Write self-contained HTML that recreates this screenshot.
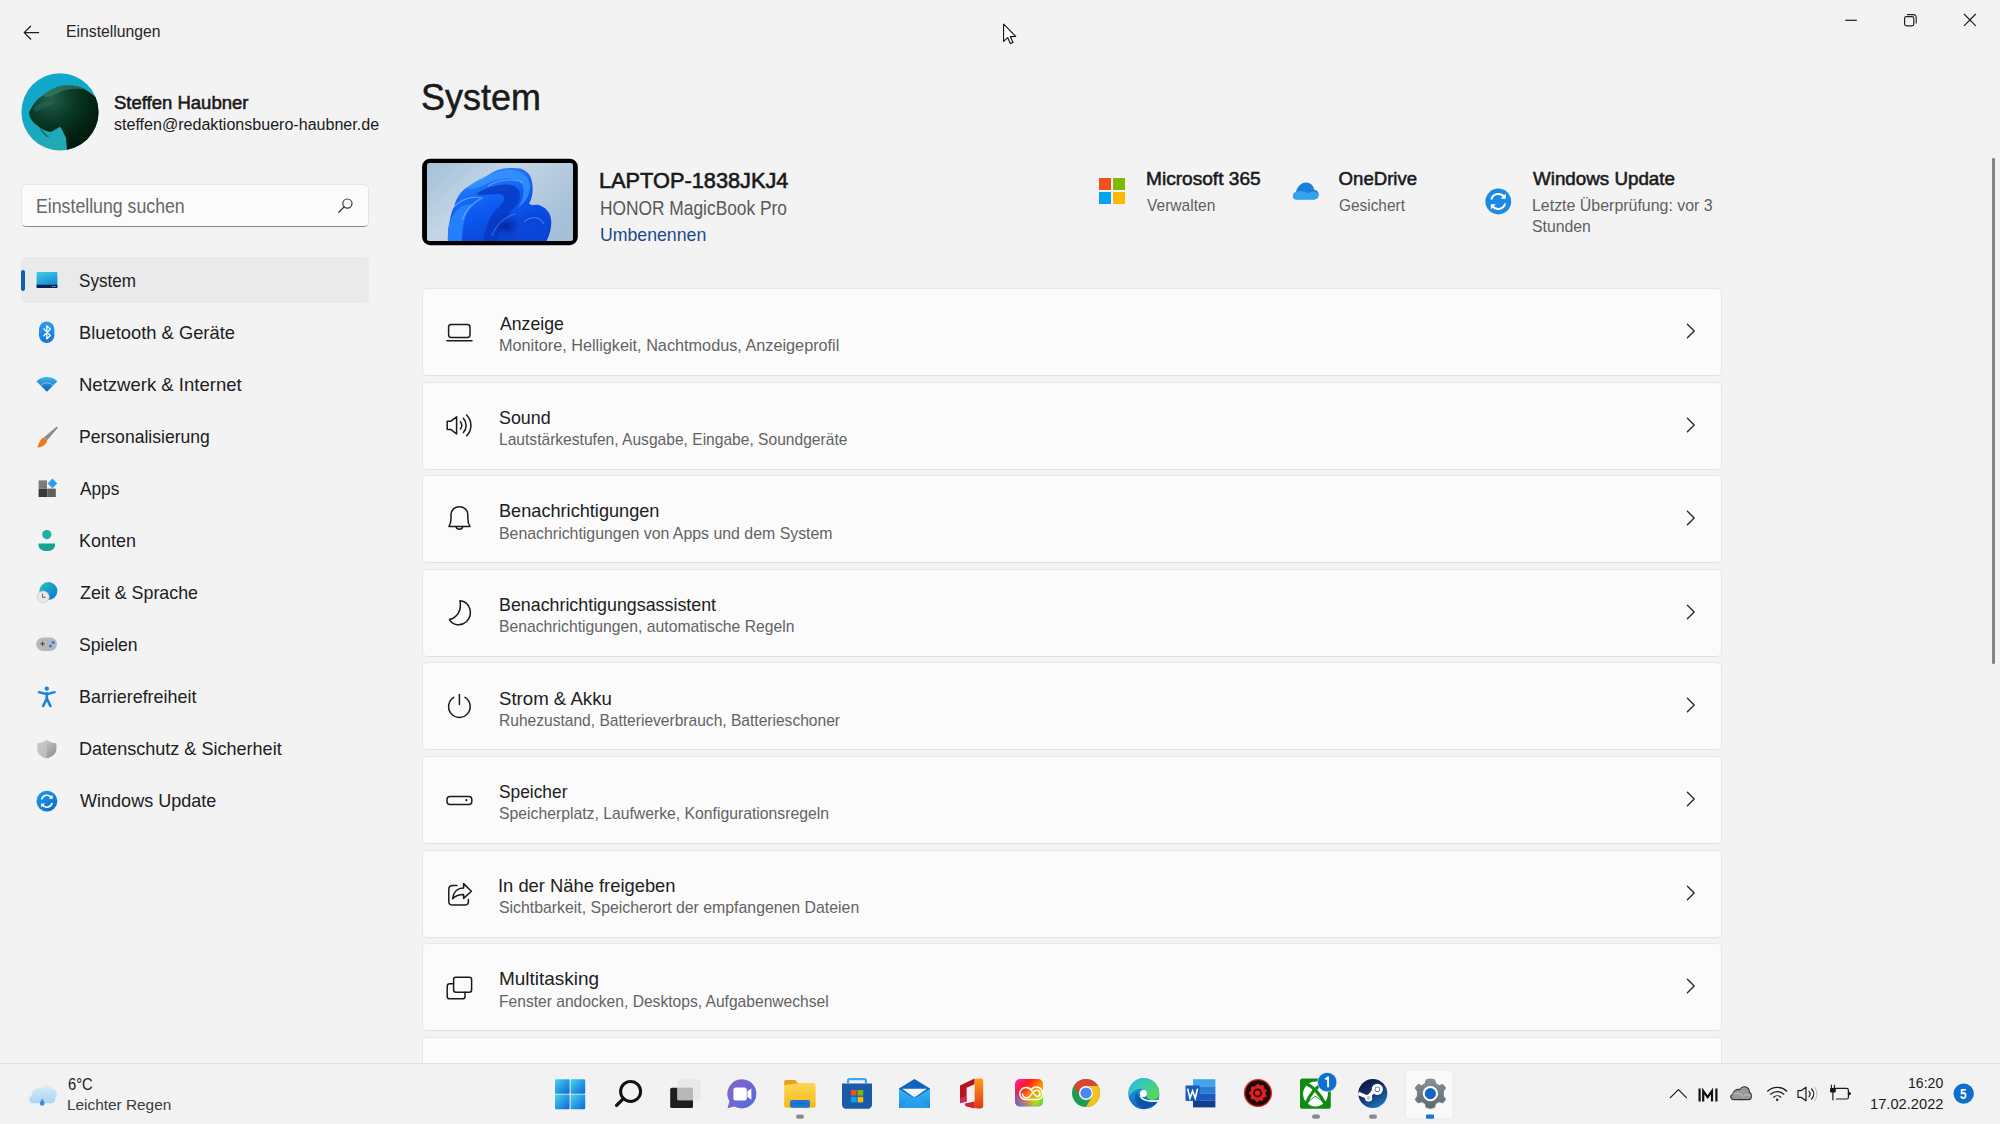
<!DOCTYPE html>
<html><head><meta charset="utf-8"><style>
html,body{margin:0;padding:0;width:2000px;height:1124px;overflow:hidden;background:#f3f3f3;font-family:"Liberation Sans", sans-serif;}
.t{position:absolute;white-space:nowrap;transform-origin:0 0;}
.a{position:absolute;}
svg{position:absolute;overflow:visible;}
</style></head><body>
<svg style="left:0;top:0" width="60" height="60" viewBox="0 0 60 60">
<path d="M38.6 32.6H24.2M30.6 26.2L24.2 32.6L30.6 39" fill="none" stroke="#1f1f1f" stroke-width="1.3" stroke-linecap="round" stroke-linejoin="round"/></svg>
<svg style="left:1830px;top:0" width="170" height="50" viewBox="1830 0 170 50">
<path d="M1845.2 20.3H1856.8" stroke="#1f1f1f" stroke-width="1.2"/>
<rect x="1904.6" y="16.6" width="9.2" height="9.2" rx="1.8" fill="none" stroke="#1f1f1f" stroke-width="1.2"/>
<path d="M1907 14.6H1913.4A2.8 2.8 0 0 1 1916.2 17.4V23.6" fill="none" stroke="#1f1f1f" stroke-width="1.1"/>
<path d="M1964 14L1975.8 25.8M1975.8 14L1964 25.8" stroke="#1f1f1f" stroke-width="1.2"/>
</svg>
<svg style="left:990px;top:15px" width="40" height="40" viewBox="990 15 40 40">
<path d="M1003.6 24.2V41.4L1007.6 37.6L1010.4 43.6L1013 42.4L1010.3 36.6L1015.7 36.4Z" fill="#fff" stroke="#111" stroke-width="1.1" stroke-linejoin="round"/></svg>
<svg style="left:18px;top:70px" width="84" height="84" viewBox="18 70 84 84">
<defs>
<linearGradient id="avbg" x1="0" y1="0" x2="0.3" y2="1"><stop offset="0" stop-color="#10a6d2"/><stop offset="0.55" stop-color="#14a9c4"/><stop offset="1" stop-color="#22aab2"/></linearGradient>
<radialGradient id="walrus" cx="0.3" cy="0.2" r="0.9"><stop offset="0" stop-color="#235f4a"/><stop offset="0.35" stop-color="#0a3a28"/><stop offset="0.7" stop-color="#02200f"/><stop offset="1" stop-color="#011508"/></radialGradient>
<clipPath id="avclip"><circle cx="60" cy="111.9" r="38.6"/></clipPath>
</defs>
<g clip-path="url(#avclip)">
<rect x="18" y="70" width="84" height="84" fill="url(#avbg)"/>
<path d="M29.2 111.9C33 104 38 98 42.7 95.4C50 90 56 86.5 62.8 85.7C72 85 80 86 85.3 89.4C90 92 94 96 99 100L102 154H67.3C66.5 146 66.5 141 65.8 137.3C63 132 62 129 59.9 126.8C56 129 53 131.5 50.1 132C45 131 41 129 38.9 126.8C35 124 32 121.5 30.7 118.6C29.5 116 29 114 29.2 111.9Z" fill="url(#walrus)"/>
<path d="M42.7 95.4C50 90 56 86.5 62.8 85.7C72 85 80 86 85.3 89.4C76 88 66 89 58 93C52 96 47 99 42.7 95.4Z" fill="#3f8a72" opacity="0.55"/>
<path d="M33 108C38 103 46 100 54 103C50 106 42 108 36 112Z" fill="#2e6a5c" opacity="0.5"/>
<path d="M38.9 126.8C42 130 46 134 49 137C47 138 44 135 41 131Z" fill="#0e5a55" opacity="0.7"/>
</g></svg>
<div class="a" style="left:21px;top:184px;width:348px;height:43px;box-sizing:border-box;background:#fbfbfb;border:1px solid #e6e6e6;border-bottom:1px solid #8a8a8a;border-radius:5px"></div>
<svg style="left:330px;top:190px" width="30" height="30" viewBox="330 190 30 30">
<circle cx="347.4" cy="203.6" r="4.6" fill="none" stroke="#3a3a3a" stroke-width="1.2"/>
<path d="M344.2 206.8L338.8 212.2" stroke="#3a3a3a" stroke-width="1.3" stroke-linecap="round"/></svg>
<div class="a" style="left:21px;top:257px;width:348px;height:45.5px;background:#eaeaea;border-radius:5px"></div>
<div class="a" style="left:21px;top:270px;width:4px;height:20.5px;background:#0f5fb3;border-radius:2px"></div>
<svg style="left:30px;top:260px" width="36" height="560" viewBox="30 260 36 560">
<defs>
<linearGradient id="sysg" x1="0" y1="0" x2="0.4" y2="1"><stop offset="0" stop-color="#3fd0e4"/><stop offset="1" stop-color="#1684d4"/></linearGradient>
<linearGradient id="btg" x1="0" y1="0" x2="0" y2="1"><stop offset="0" stop-color="#2b9cf2"/><stop offset="1" stop-color="#1677d8"/></linearGradient>
<linearGradient id="wifig" x1="0" y1="0" x2="0" y2="1"><stop offset="0" stop-color="#3ab8f5"/><stop offset="1" stop-color="#0c5ab8"/></linearGradient>
<linearGradient id="globeg" x1="0" y1="0" x2="1" y2="1"><stop offset="0" stop-color="#26c6c0"/><stop offset="1" stop-color="#0a6fd0"/></linearGradient>
<linearGradient id="shg" x1="0" y1="0" x2="1" y2="1"><stop offset="0" stop-color="#d8d8d8"/><stop offset="1" stop-color="#8a8a8a"/></linearGradient>
<linearGradient id="wug" x1="0" y1="0" x2="1" y2="1"><stop offset="0" stop-color="#1e9bf0"/><stop offset="1" stop-color="#0b6cc9"/></linearGradient>
</defs>
<!-- System -->
<rect x="36.6" y="272" width="20.8" height="16" rx="1.2" fill="url(#sysg)"/>
<rect x="36.6" y="284.8" width="20.8" height="3.2" rx="0.8" fill="#06244f"/><rect x="52.4" y="286" width="0.9" height="1" fill="#cfe"/><rect x="54.4" y="286" width="0.9" height="1" fill="#cfe"/>
<!-- Bluetooth -->
<rect x="39" y="321.6" width="15.4" height="21.4" rx="7.7" fill="url(#btg)"/>
<path d="M43.4 328.4L50.4 335.6L46.8 338.8V325.8L50.4 329L43.4 336.2" fill="none" stroke="#fff" stroke-width="1.3" stroke-linejoin="round"/>
<!-- Wifi -->
<path d="M36.4 381.2A15 15 0 0 1 57.4 381.2L46.9 391.8Z" fill="url(#wifig)"/>
<path d="M40.6 385.4A9 9 0 0 1 53.2 385.4" fill="none" stroke="#fff" stroke-width="0.9" opacity="0.5"/>
<!-- Brush -->
<path d="M56.8 426.4L58 427.6L47.2 440.2L44 437.2Z" fill="#8d8d8d"/>
<path d="M44 437.2L47.2 440.2C46.6 444 43 447 37.4 447.4C38.8 443 40.4 438.6 44 437.2Z" fill="#f07a1a"/>
<!-- Apps -->
<rect x="38.6" y="480.4" width="8.4" height="8" fill="#7c7c7c"/>
<rect x="38.6" y="488.6" width="8.4" height="8.4" fill="#383838"/>
<rect x="47.2" y="488.6" width="8.6" height="8.4" fill="#5e5e5e"/>
<path d="M52.4 478.6L57.2 483.4L52.4 488.2L47.6 483.4Z" fill="#2b9df0"/>
<!-- Konten -->
<circle cx="46.8" cy="534.6" r="4.6" fill="#1fb0a0"/>
<path d="M38.6 543.4H55A0 0 0 0 1 55 543.4V545.2C55 549 51.2 551 46.8 551C42.4 551 38.6 549 38.6 545.2Z" fill="#17a392"/>
<!-- Zeit -->
<circle cx="48.4" cy="591" r="9" fill="url(#globeg)"/>
<circle cx="43.2" cy="597" r="6" fill="#e8e8e8" stroke="#c8c8c8" stroke-width="0.6"/>
<path d="M42.6 593.6V597.4H45.6" fill="none" stroke="#555" stroke-width="0.9"/>
<!-- Spielen -->
<rect x="36.2" y="637.4" width="20.8" height="13.6" rx="6.8" fill="#b8b8bc"/>
<path d="M40.4 643.8H44.8M42.6 641.6V646" stroke="#444" stroke-width="1"/>
<circle cx="50.4" cy="646" r="1.5" fill="#1e7fd8"/><circle cx="53.2" cy="642.6" r="1.5" fill="#1e7fd8"/>
<!-- Barriere -->
<circle cx="46.8" cy="688.6" r="2.2" fill="#1a84dd"/>
<path d="M39 692.2L46.8 694.2L54.6 692.2" fill="none" stroke="#1a84dd" stroke-width="2.4" stroke-linecap="round"/>
<path d="M46.8 693.4V698.4L43.2 706M46.8 698.4L50.4 706" fill="none" stroke="#1a84dd" stroke-width="2.6" stroke-linecap="round"/>
<!-- Shield -->
<path d="M46.9 740C50 742.4 53.4 743.2 56.4 743.2V749.2C56.4 753.6 52.8 756.8 46.9 758.2C41 756.8 37.4 753.6 37.4 749.2V743.2C40.4 743.2 43.8 742.4 46.9 740Z" fill="url(#shg)"/>
<path d="M46.9 740V758.2C41 756.8 37.4 753.6 37.4 749.2V743.2C40.4 743.2 43.8 742.4 46.9 740Z" fill="#c4c4c4" opacity="0.7"/>
<!-- WU -->
<circle cx="46.9" cy="801.2" r="10.4" fill="url(#wug)"/>
<path d="M41.6 799.4A5.6 5.6 0 0 1 51.6 797.6M52.2 803A5.6 5.6 0 0 1 42.2 804.8" fill="none" stroke="#fff" stroke-width="1.6"/>
<path d="M52.6 794.8V798.8H48.8Z" fill="#fff"/><path d="M41.2 807.6V803.6H45Z" fill="#fff"/>
</svg>
<svg style="left:420px;top:156px" width="162" height="94" viewBox="420 156 162 94">
<defs>
<linearGradient id="scr" x1="0" y1="0" x2="1" y2="0.6"><stop offset="0" stop-color="#a3bfd8"/><stop offset="0.45" stop-color="#c4d6e6"/><stop offset="1" stop-color="#a6c0d8"/></linearGradient>
<linearGradient id="bl1" x1="0.2" y1="0" x2="0.7" y2="1"><stop offset="0" stop-color="#2f8cff"/><stop offset="0.5" stop-color="#0b5af2"/><stop offset="1" stop-color="#0a3fd0"/></linearGradient>
<radialGradient id="blc" cx="0.5" cy="0.5" r="0.5"><stop offset="0" stop-color="#06208a"/><stop offset="1" stop-color="#0a3ad0" stop-opacity="0"/></radialGradient>
<clipPath id="scc"><rect x="427" y="163" width="146" height="78" rx="2"/></clipPath>
</defs>
<rect x="424.3" y="160.9" width="151.3" height="82.1" rx="6" fill="#000" stroke="#000" stroke-width="4.4"/>
<rect x="427" y="163" width="146" height="78" rx="2" fill="url(#scr)"/>
<g clip-path="url(#scc)">
<path d="M448 242C447.6 234 448.4 226 449.6 222C450.6 215 452 210 454 207C455 203 456 200 457.4 198C460 193 463 190 466 188C472 184 477 181 483 179C490 173 497 169.6 503.5 168.6C510 167.6 516 167.8 520.5 168.6C526 170.6 529.6 174 531 178C532.6 183 533 188 532.5 192.5C532 197 530.8 201 529 203.6L531.7 205.3C534 204.6 536.4 204.6 539 205C543.4 206.4 547.4 209.6 549.6 214C551.2 218 551.6 222 551 226.6C550.4 232 548.6 237 546 242Z" fill="url(#bl1)"/>
<path d="M466 188C476 180 492 172 506 170C518 169 528 174 530 184C531 194 526 202 518 208C524 198 526 188 520 182C512 176 498 178 486 184C478 188 472 190 466 188Z" fill="#3b95ff" opacity="0.75"/>
<path d="M476 194C488 186 504 182 514 186C522 190 522 200 514 208C506 216 500 226 498 242H484C484 228 490 214 500 206C506 200 506 194 498 194C490 194 482 196 476 194Z" fill="#0838c0" opacity="0.8"/>
<ellipse cx="506" cy="226" rx="18" ry="14" fill="url(#blc)" opacity="0.9"/>
<path d="M449.6 222C454 210 462 204 472 204C466 212 462 224 462 242H448C447.6 234 448.4 226 449.6 222Z" fill="#2a86ff" opacity="0.85"/>
<path d="M454 207C462 198 474 196 482 198C474 202 466 210 462 220" fill="none" stroke="#70b8ff" stroke-width="1.2" opacity="0.7"/>
<path d="M520 218C528 210 540 210 546 218C550 226 548 236 544 242H516C514 232 516 224 520 218Z" fill="#0b46d8" opacity="0.85"/>
<path d="M524 222C530 216 540 216 544 224" fill="none" stroke="#4aa0ff" stroke-width="1.1" opacity="0.7"/>
<path d="M488 186C498 180 512 178 522 182" fill="none" stroke="#8cc8ff" stroke-width="1" opacity="0.6"/>
<path d="M492 236C496 224 506 216 516 214" fill="none" stroke="#3a8cff" stroke-width="1.1" opacity="0.6"/>
</g>
</svg>
<svg style="left:1090px;top:170px" width="440" height="60" viewBox="1090 170 440 60">
<defs><linearGradient id="odg" x1="0" y1="0" x2="0" y2="1"><stop offset="0" stop-color="#0a64c8"/><stop offset="1" stop-color="#2a9ae8"/></linearGradient></defs>
<rect x="1099" y="178" width="12" height="12" fill="#f25022"/>
<rect x="1113" y="178" width="12" height="12" fill="#7fba00"/>
<rect x="1099" y="192" width="12" height="12" fill="#00a4ef"/>
<rect x="1113" y="192" width="12" height="12" fill="#ffb900"/>
<path d="M1296.4 199.4C1292 199.4 1291.6 193 1296 192.2C1296.8 187.4 1301.2 182.6 1306 182.6C1310.4 182.6 1313.6 185.8 1314.2 189.8C1317.6 190 1319 193 1318.6 195.6C1318.4 198 1316.6 199.4 1314 199.4Z" fill="#1a7fd8"/>
<path d="M1296.4 199.4C1292 199.4 1291.6 193 1296 192.2C1299 190.4 1304 190.6 1308 193.4C1311 191 1315.6 190.6 1318 193.4C1319.2 196.6 1317 199.4 1314 199.4Z" fill="#34a3ef"/>
</svg>
<svg style="left:1480px;top:184px" width="36" height="36" viewBox="1480 184 36 36">
<circle cx="1498.3" cy="201.5" r="12.9" fill="#1a8ae6"/>
<path d="M1491.4 199.4A7.2 7.2 0 0 1 1504.4 197.2M1505.2 203.6A7.2 7.2 0 0 1 1492.2 205.8" fill="none" stroke="#fff" stroke-width="2"/>
<path d="M1505.8 193.6V198.8H1500.8Z" fill="#fff"/><path d="M1490.8 209.4V204.2H1495.8Z" fill="#fff"/>
</svg>
<div class="a" style="left:422px;top:288.0px;width:1300px;height:88.0px;box-sizing:border-box;background:#fbfbfb;border:1px solid #e6e6e6;border-bottom-color:#e0e0e0;border-radius:5px;"></div>
<svg style="left:1680px;top:320.9px" width="20" height="20" viewBox="0 0 20 20"><path d="M7.4 3.2L14.2 10L7.4 16.8" fill="none" stroke="#262626" stroke-width="1.3" stroke-linecap="round" stroke-linejoin="round"/></svg>
<div class="a" style="left:422px;top:381.6px;width:1300px;height:88.0px;box-sizing:border-box;background:#fbfbfb;border:1px solid #e6e6e6;border-bottom-color:#e0e0e0;border-radius:5px;"></div>
<svg style="left:1680px;top:414.5px" width="20" height="20" viewBox="0 0 20 20"><path d="M7.4 3.2L14.2 10L7.4 16.8" fill="none" stroke="#262626" stroke-width="1.3" stroke-linecap="round" stroke-linejoin="round"/></svg>
<div class="a" style="left:422px;top:475.2px;width:1300px;height:88.0px;box-sizing:border-box;background:#fbfbfb;border:1px solid #e6e6e6;border-bottom-color:#e0e0e0;border-radius:5px;"></div>
<svg style="left:1680px;top:508.1px" width="20" height="20" viewBox="0 0 20 20"><path d="M7.4 3.2L14.2 10L7.4 16.8" fill="none" stroke="#262626" stroke-width="1.3" stroke-linecap="round" stroke-linejoin="round"/></svg>
<div class="a" style="left:422px;top:568.8px;width:1300px;height:88.0px;box-sizing:border-box;background:#fbfbfb;border:1px solid #e6e6e6;border-bottom-color:#e0e0e0;border-radius:5px;"></div>
<svg style="left:1680px;top:601.7px" width="20" height="20" viewBox="0 0 20 20"><path d="M7.4 3.2L14.2 10L7.4 16.8" fill="none" stroke="#262626" stroke-width="1.3" stroke-linecap="round" stroke-linejoin="round"/></svg>
<div class="a" style="left:422px;top:662.4px;width:1300px;height:88.0px;box-sizing:border-box;background:#fbfbfb;border:1px solid #e6e6e6;border-bottom-color:#e0e0e0;border-radius:5px;"></div>
<svg style="left:1680px;top:695.3px" width="20" height="20" viewBox="0 0 20 20"><path d="M7.4 3.2L14.2 10L7.4 16.8" fill="none" stroke="#262626" stroke-width="1.3" stroke-linecap="round" stroke-linejoin="round"/></svg>
<div class="a" style="left:422px;top:756.0px;width:1300px;height:88.0px;box-sizing:border-box;background:#fbfbfb;border:1px solid #e6e6e6;border-bottom-color:#e0e0e0;border-radius:5px;"></div>
<svg style="left:1680px;top:788.9px" width="20" height="20" viewBox="0 0 20 20"><path d="M7.4 3.2L14.2 10L7.4 16.8" fill="none" stroke="#262626" stroke-width="1.3" stroke-linecap="round" stroke-linejoin="round"/></svg>
<div class="a" style="left:422px;top:849.6px;width:1300px;height:88.0px;box-sizing:border-box;background:#fbfbfb;border:1px solid #e6e6e6;border-bottom-color:#e0e0e0;border-radius:5px;"></div>
<svg style="left:1680px;top:882.5px" width="20" height="20" viewBox="0 0 20 20"><path d="M7.4 3.2L14.2 10L7.4 16.8" fill="none" stroke="#262626" stroke-width="1.3" stroke-linecap="round" stroke-linejoin="round"/></svg>
<div class="a" style="left:422px;top:943.2px;width:1300px;height:88.0px;box-sizing:border-box;background:#fbfbfb;border:1px solid #e6e6e6;border-bottom-color:#e0e0e0;border-radius:5px;"></div>
<svg style="left:1680px;top:976.1px" width="20" height="20" viewBox="0 0 20 20"><path d="M7.4 3.2L14.2 10L7.4 16.8" fill="none" stroke="#262626" stroke-width="1.3" stroke-linecap="round" stroke-linejoin="round"/></svg>
<div class="a" style="left:422px;top:1036.8px;width:1300px;height:26.2px;box-sizing:border-box;background:#fbfbfb;border:1px solid #e6e6e6;border-bottom-color:#e0e0e0;border-radius:5px 5px 0 0;border-bottom:none;"></div>
<svg style="left:0;top:0" width="2000" height="1124" viewBox="0 0 2000 1124"><rect x="448.6" y="324.4" width="21.4" height="13" rx="2.6" fill="none" stroke="#1a1a1a" stroke-width="1.5" stroke-linecap="round" stroke-linejoin="round"/><path d="M446.8 340.8H472" fill="none" stroke="#1a1a1a" stroke-width="1.5" stroke-linecap="round" stroke-linejoin="round"/><path d="M447.2 421.2H451L456.6 416.8V434L451 429.6H447.2Z" fill="none" stroke="#1a1a1a" stroke-width="1.5" stroke-linecap="round" stroke-linejoin="round"/><path d="M460.4 421.8C462.4 424.2 462.4 426.6 460.4 429" fill="none" stroke="#1a1a1a" stroke-width="1.5" stroke-linecap="round" stroke-linejoin="round"/><path d="M463.4 418.2C467 422.4 467 428.4 463.4 432.6" fill="none" stroke="#1a1a1a" stroke-width="1.5" stroke-linecap="round" stroke-linejoin="round"/><path d="M466.6 415C472.4 421.2 472.4 429.6 466.6 435.8" fill="none" stroke="#1a1a1a" stroke-width="1.5" stroke-linecap="round" stroke-linejoin="round"/><path d="M449 526.4C450.6 524 451 522 451 518.2V514.6C451 509.6 455 506.8 459.4 506.8C463.8 506.8 467.8 509.6 467.8 514.6V518.2C467.8 522 468.2 524 470 526.4Z" fill="none" stroke="#1a1a1a" stroke-width="1.5" stroke-linecap="round" stroke-linejoin="round"/><path d="M456 526.6A3.5 3.5 0 0 0 462.8 526.6" fill="none" stroke="#1a1a1a" stroke-width="1.5" stroke-linecap="round" stroke-linejoin="round"/><path d="M460 600.8C470 601.8 474 614 466.4 621.8C461 626.6 452.8 625.4 449.4 619.6C456.6 617.8 462 610.8 460 600.8Z" fill="none" stroke="#1a1a1a" stroke-width="1.5" stroke-linecap="round" stroke-linejoin="round"/><path d="M459.4 694.4V704.4" fill="none" stroke="#1a1a1a" stroke-width="1.5" stroke-linecap="round" stroke-linejoin="round"/><path d="M453.8 697.4A10.8 10.8 0 1 0 465 697.4" fill="none" stroke="#1a1a1a" stroke-width="1.5" stroke-linecap="round" stroke-linejoin="round"/><rect x="447" y="796.4" width="24.8" height="8.2" rx="3" fill="none" stroke="#1a1a1a" stroke-width="1.5" stroke-linecap="round" stroke-linejoin="round"/><circle cx="466.4" cy="800.2" r="1.1" fill="#1a1a1a"/><path d="M457 885.4H452.6C450.4 885.4 448.8 887 448.8 889.2V901.4C448.8 903.6 450.4 905 452.6 905H464.6C466.8 905 468.4 903.6 468.4 901.4V899.6" fill="none" stroke="#1a1a1a" stroke-width="1.5" stroke-linecap="round" stroke-linejoin="round"/><path d="M463.6 883.6L471.4 891.2L463.6 898.4V894.4C459 894.4 455.2 896 452.6 898.6C453.4 892 457.6 888 463.6 888Z" fill="none" stroke="#1a1a1a" stroke-width="1.5" stroke-linecap="round" stroke-linejoin="round"/><rect x="453.6" y="977.2" width="18" height="15" rx="2.2" fill="none" stroke="#1a1a1a" stroke-width="1.5" stroke-linecap="round" stroke-linejoin="round"/><path d="M453.6 983.8H449.6C448 983.8 447.2 984.8 447.2 986.4V996.4C447.2 998 448 998.8 449.6 998.8H462.6C464.2 998.8 465 998 465 996.4V992.2" fill="none" stroke="#1a1a1a" stroke-width="1.5" stroke-linecap="round" stroke-linejoin="round"/></svg>
<div class="a" style="left:1992px;top:157.5px;width:2.6px;height:506.5px;background:#858585;border-radius:1.3px"></div>
<div class="a" style="left:0;top:1063px;width:2000px;height:61px;background:#f2f2f2;border-top:1px solid #e0e0e0;box-sizing:border-box"></div>
<svg style="left:0;top:0" width="2000" height="1124" viewBox="0 0 2000 1124"><defs>
<linearGradient id="stg" x1="0" y1="0" x2="1" y2="1"><stop offset="0" stop-color="#48d1f7"/><stop offset="1" stop-color="#0969cf"/></linearGradient>
<linearGradient id="chatg" x1="0" y1="0" x2="1" y2="1"><stop offset="0" stop-color="#8a64c8"/><stop offset="1" stop-color="#4f6ae0"/></linearGradient>
<linearGradient id="fold" x1="0" y1="0" x2="0" y2="1"><stop offset="0" stop-color="#ffd95a"/><stop offset="1" stop-color="#f5b916"/></linearGradient>
<linearGradient id="mailg" x1="0" y1="0" x2="0" y2="1"><stop offset="0" stop-color="#38b6f5"/><stop offset="1" stop-color="#1a8ee0"/></linearGradient>
<linearGradient id="offg" x1="0" y1="0" x2="0" y2="1"><stop offset="0" stop-color="#ff9a1a"/><stop offset="0.6" stop-color="#f0601a"/><stop offset="1" stop-color="#d83a12"/></linearGradient>
<linearGradient id="ccg" x1="0" y1="0" x2="1" y2="1"><stop offset="0" stop-color="#ff20c0"/><stop offset="0.3" stop-color="#ff1a1a"/><stop offset="0.55" stop-color="#ff8a00"/><stop offset="0.8" stop-color="#b8e010"/><stop offset="1" stop-color="#20d060"/></linearGradient>
<linearGradient id="ccg2" x1="0" y1="1" x2="0.7" y2="0.2"><stop offset="0" stop-color="#2a7dff" stop-opacity="1"/><stop offset="0.55" stop-color="#9a40ff" stop-opacity="0"/></linearGradient>
<linearGradient id="edg" x1="0" y1="0" x2="0.3" y2="1"><stop offset="0" stop-color="#2ab6ea"/><stop offset="0.5" stop-color="#1888dc"/><stop offset="1" stop-color="#0d5fb5"/></linearGradient>
<linearGradient id="edg2" x1="0" y1="0" x2="1" y2="0.8"><stop offset="0.2" stop-color="#2cc3d6"/><stop offset="1" stop-color="#5bd94e"/></linearGradient>
<linearGradient id="wordg" x1="0" y1="0" x2="0" y2="1"><stop offset="0" stop-color="#41a5ee"/><stop offset="0.5" stop-color="#2b7cd3"/><stop offset="1" stop-color="#185abd"/></linearGradient>
<linearGradient id="steamg" x1="0.2" y1="0" x2="0.8" y2="1"><stop offset="0" stop-color="#0d1640"/><stop offset="0.45" stop-color="#14306a"/><stop offset="1" stop-color="#1a7bc4"/></linearGradient>
<linearGradient id="gearg" x1="0" y1="0" x2="0" y2="1"><stop offset="0" stop-color="#8a9098"/><stop offset="1" stop-color="#5f666e"/></linearGradient>
<linearGradient id="cloudg" x1="0" y1="0" x2="0" y2="1"><stop offset="0" stop-color="#d8ecfa"/><stop offset="1" stop-color="#a8d4f0"/></linearGradient>
</defs><path d="M33.4 1103.6C28.6 1103.6 27 1097.4 31.4 1095.6C31.6 1090.4 36.4 1086.6 41.4 1088.2C43.6 1084 50.4 1084 52.6 1089C57 1089.4 58.4 1095 55.4 1097.8C56.4 1101.6 53.4 1103.6 51 1103.6Z" fill="url(#cloudg)" stroke="#e6eef5" stroke-width="1"/><path d="M42.2 1098.4L44.4 1102.4A2.4 2.4 0 1 1 40 1102.4Z" fill="#3a8ee8"/><rect x="555" y="1079.2" width="14.6" height="14.6" rx="1" fill="url(#stg)"/><rect x="570.6" y="1079.2" width="14.6" height="14.6" rx="1" fill="url(#stg)"/><rect x="555" y="1094.6" width="14.6" height="14.6" rx="1" fill="url(#stg)"/><rect x="570.6" y="1094.6" width="14.6" height="14.6" rx="1" fill="url(#stg)"/><circle cx="630.6" cy="1091.4" r="10" fill="none" stroke="#111" stroke-width="3"/><path d="M623.4 1098.6L616.6 1105.4" stroke="#111" stroke-width="3.4" stroke-linecap="round"/><rect x="670.2" y="1087.8" width="22.8" height="20.2" rx="1.6" fill="#1e1e1e"/><rect x="677.4" y="1079.6" width="23.2" height="20.6" rx="1.6" fill="#e6e6e6" opacity="0.85"/><rect x="677.4" y="1087.8" width="15.6" height="12.4" fill="#b8b8b8"/><path d="M742 1079.2A14.6 14.6 0 1 1 734.4 1106.4L727.6 1108.2L729.4 1101.2A14.6 14.6 0 0 1 742 1079.2Z" fill="url(#chatg)"/><rect x="733.4" y="1087.6" width="13.4" height="13" rx="2.6" fill="#fff"/><path d="M747.4 1091.2L751.4 1088.4V1099.8L747.4 1097Z" fill="#fff"/><path d="M784.2 1082.2C784.2 1080.8 785 1080 786.4 1080H795.2L797.8 1083H813.6C814.8 1083 815.6 1083.8 815.6 1085V1105.8C815.6 1107 814.8 1107.8 813.6 1107.8H786.2C785 1107.8 784.2 1107 784.2 1105.8Z" fill="url(#fold)"/><path d="M784.2 1082.2C784.2 1080.8 785 1080 786.4 1080H795.2L797.8 1083.6L784.2 1085Z" fill="#e3a21a"/><rect x="790" y="1100" width="20" height="7.8" rx="2" fill="#1a76d2"/><path d="M794.6 1103.4H805.4" stroke="#0d5aa8" stroke-width="0.8"/><path d="M842 1083.6H872V1104.6C872 1107 870.4 1108.8 868 1108.8H846C843.6 1108.8 842 1107 842 1104.6Z" fill="#1b5aa8"/><path d="M848 1083.6V1080.8C848 1079.8 848.8 1079.2 849.8 1079.2H864.2C865.2 1079.2 866 1079.8 866 1080.8V1083.6" fill="none" stroke="#38a8f0" stroke-width="2.2"/><rect x="851" y="1090" width="5.6" height="5.6" fill="#f25022"/><rect x="857.6" y="1090" width="5.6" height="5.6" fill="#7fba00"/><rect x="851" y="1096.8" width="5.6" height="5.6" fill="#00a4ef"/><rect x="857.6" y="1096.8" width="5.6" height="5.6" fill="#ffb900"/><path d="M899 1088.6L914.4 1079L930 1088.6V1108H899Z" fill="#0f64c0"/><path d="M902 1088.8H927L914.4 1097.4Z" fill="#f0f6fb"/><path d="M899 1089L914.4 1098.6L930 1089V1108H899Z" fill="url(#mailg)"/><path d="M899 1108L914.4 1096L930 1108Z" fill="#2aa6ef" opacity="0.6"/><path d="M960 1085.6L974.6 1078.6V1084.2L966.6 1087.8V1101.6L960 1103.2Z" fill="#b4141f"/><path d="M960 1098L966.6 1096V1101.6L960 1103.2Z" fill="#d0306a" opacity="0.8"/><path d="M964.8 1103.6L974.8 1101.4V1108.4L966.4 1106.4C965.2 1106 964.8 1105 964.8 1103.6Z" fill="#d3202a"/><rect x="974.6" y="1078.6" width="8.6" height="29.8" rx="2.4" fill="url(#offg)"/><rect x="1015" y="1079" width="28" height="27.6" rx="5" fill="url(#ccg)"/><rect x="1015" y="1079" width="28" height="27.6" rx="5" fill="url(#ccg2)"/><path d="M1026.4 1099.6C1022.6 1099.6 1019.8 1097 1019.8 1093.6C1019.8 1090.2 1022.6 1087.6 1026 1087.6C1028.6 1087.6 1030.4 1089 1031.6 1090.6L1034.4 1094.4C1035.2 1095.6 1036 1096.4 1037.2 1096.4C1039 1096.4 1040 1095 1040 1093.4C1040 1091.6 1038.6 1090.2 1036.6 1090.2C1034.6 1090.2 1033.4 1091.6 1032.4 1093L1030.4 1095.6C1029.4 1097 1028.2 1097.8 1026.6 1097.8C1024.4 1097.8 1022.4 1096 1022.4 1093.6" fill="none" stroke="#fff" stroke-width="1.5"/><path d="M1026.4 1099.6H1037C1040.6 1099.6 1043 1097 1043 1093.6" fill="none" stroke="#fff" stroke-width="1.5" opacity="0"/><path d="M1026.4 1099.6H1036.8C1040.4 1099.6 1042.6 1096.8 1042.6 1093.4C1042.6 1089.8 1039.6 1087 1036.4 1087C1033.8 1087 1032 1088.4 1030.6 1090.2" fill="none" stroke="#fff" stroke-width="1.5"/><circle cx="1086" cy="1093" r="14" fill="#1f9d4e"/><path d="M1073.88 1086A14 14 0 0 1 1098.12 1086H1086A7 7 0 0 0 1079.94 1096.5Z" fill="#e1412f"/><path d="M1098.12 1086A14 14 0 0 1 1086 1107L1092.06 1096.5A7 7 0 0 0 1086 1086Z" fill="#f9c21b"/><circle cx="1086" cy="1093" r="7" fill="#fff"/><circle cx="1086" cy="1093" r="5.6" fill="#4a8af0"/><clipPath id="edgeclip"><path d="M1143.7 1078A15.6 15.6 0 0 1 1159.3 1093.6C1159.3 1097 1158.8 1099.6 1157.8 1101.6C1155 1106.4 1150 1109.2 1144 1109.2A15.6 15.6 0 0 1 1143.7 1078Z"/></clipPath><g clip-path="url(#edgeclip)"><rect x="1126" y="1076" width="36" height="36" fill="url(#edg)"/><path d="M1143.7 1078A15.6 15.6 0 0 1 1159.3 1093.6C1159.3 1097.6 1157 1100 1152.6 1100C1148 1100 1146.4 1097.4 1146.4 1094.4C1146.4 1090 1141 1087.6 1136.4 1089.4C1133 1090.8 1130.6 1093.4 1128.6 1096.4C1128.2 1086 1135 1078 1143.7 1078Z" fill="url(#edg2)"/><path d="M1136.6 1092C1134 1096 1134.6 1102 1139.4 1106C1143.6 1109.4 1150.6 1108.6 1157.8 1101.6C1153 1102.4 1147 1102 1142.6 1099.2C1139.2 1097 1137 1094.6 1136.6 1092Z" fill="#0b4f9e" opacity="0.75"/></g><circle cx="1143.4" cy="1093.6" r="3.5" fill="#fff"/><path d="M1140.2 1096.2C1142.6 1100.2 1149 1102 1158.8 1100.6" fill="none" stroke="#fff" stroke-width="1.6"/><rect x="1193" y="1079.2" width="22.4" height="7.2" fill="#41a5ee"/><rect x="1193" y="1086.4" width="22.4" height="7" fill="#2b7cd3"/><rect x="1193" y="1093.4" width="22.4" height="7" fill="#185abd"/><rect x="1193" y="1100.4" width="22.4" height="7" fill="#103f91"/><rect x="1185.5" y="1085.5" width="14.2" height="15.6" rx="1" fill="#185abd"/><path d="M1187.6 1088.6L1190 1098.2L1192.6 1091L1195.2 1098.2L1197.6 1088.6" fill="none" stroke="#fff" stroke-width="1.7"/><circle cx="1258" cy="1093" r="13.4" fill="#1a0a0a" stroke="#e02a2a" stroke-width="1.4"/><path d="M1258 1083.6L1260.2 1085.6L1263.6 1085L1264 1088.4L1267 1090.4L1265.4 1093.4L1267 1096.4L1263.6 1097.6L1262.8 1101L1259.4 1100.4L1256.6 1102.4L1254.4 1099.6L1250.8 1099.2L1251 1095.6L1248.8 1093L1251 1090.2L1251 1086.8L1254.6 1086.4Z" fill="#e0201e"/><circle cx="1257.6" cy="1093" r="3.6" fill="none" stroke="#1a0a0a" stroke-width="1.6"/><rect x="1300" y="1078.4" width="30.8" height="30.4" rx="2.6" fill="#118a10"/><circle cx="1315.5" cy="1094" r="12.4" fill="#fff"/><path d="M1305.6 1083.2C1312 1086 1320 1094 1325.6 1104.6M1324.6 1082.6C1317 1086 1310 1094 1305.8 1104.2" fill="none" stroke="#118a10" stroke-width="3.2"/><path d="M1306 1104.4C1310 1100 1313 1097.4 1315.5 1096.4C1318 1097.4 1321 1100 1325 1104.4" fill="none" stroke="#118a10" stroke-width="1"/><circle cx="1327.2" cy="1082.1" r="9.7" fill="#0f6fd0" stroke="#f0f0f0" stroke-width="0.6"/><path d="M1325.2 1079.4L1328.1 1077.2V1087.2" fill="none" stroke="#fff" stroke-width="1.9" stroke-linejoin="round"/><circle cx="1372.8" cy="1093.6" r="14.5" fill="url(#steamg)"/><path d="M1358.4 1093.4L1368.2 1097.6L1373.4 1091" fill="none" stroke="#fff" stroke-width="3.6" stroke-linejoin="round"/><circle cx="1377.3" cy="1089.3" r="5.6" fill="#fff"/><circle cx="1377.3" cy="1089.3" r="2.6" fill="#2a4f80"/><circle cx="1377.3" cy="1089.3" r="2" fill="#fff"/><circle cx="1368.6" cy="1098" r="3.6" fill="#fff"/><circle cx="1368.6" cy="1098" r="2" fill="#1d4f88" opacity="0.3"/><rect x="1405.4" y="1069.8" width="47.6" height="49" rx="4" fill="#f9f9f9" stroke="#e8e8e8" stroke-width="0.8"/><path d="M1430.4 1079L1434.6 1079.8L1435.6 1083.6L1439 1085.6L1442.8 1084.4L1445.6 1088L1443.4 1091.4V1096L1445.6 1099.4L1442.8 1103L1439 1101.8L1435.6 1103.8L1434.6 1107.6L1430.4 1108.4L1426.2 1107.6L1425.2 1103.8L1421.8 1101.8L1418 1103L1415.2 1099.4L1417.4 1096V1091.4L1415.2 1088L1418 1084.4L1421.8 1085.6L1425.2 1083.6L1426.2 1079.8Z" fill="url(#gearg)" stroke="#7d848c" stroke-width="1" stroke-linejoin="round"/><circle cx="1430.4" cy="1093.6" r="7.6" fill="#fff"/><circle cx="1430.4" cy="1093.6" r="5.6" fill="#1566c2"/><rect x="796" y="1114.6" width="8" height="4.2" rx="2.1" fill="#8a8a8a"/><rect x="1312" y="1114.6" width="8" height="4.2" rx="2.1" fill="#8a8a8a"/><rect x="1369" y="1114.6" width="8" height="4.2" rx="2.1" fill="#8a8a8a"/><rect x="1426" y="1114.6" width="8" height="4.2" rx="1" fill="#1a73d6"/><path d="M1670.4 1097.6L1678.4 1089.6L1686.4 1097.6" fill="none" stroke="#1a1a1a" stroke-width="1.2" stroke-linecap="round" stroke-linejoin="round"/><path d="M1699.6 1088.6V1101.4M1703.2 1101.4V1091L1707.6 1097.2L1712 1091V1101.4M1716.4 1088.6V1101.4" fill="none" stroke="#111" stroke-width="2.2"/><path d="M1733.6 1099.6C1730.4 1099.6 1729.6 1095.6 1732.6 1094.6C1733 1090.8 1736.6 1088.8 1739.8 1089.6C1741.4 1086.4 1746 1085.6 1748.4 1088.6C1749.2 1089.6 1749.4 1091 1749.2 1092.2C1752 1092.8 1752.4 1099.6 1748.6 1099.6Z" fill="#9a9a9a" stroke="#333" stroke-width="1.1"/><path d="M1732.6 1094.6C1736 1092.4 1741 1093.8 1743.6 1096.4C1745 1094.6 1748.6 1094 1750.8 1096" fill="none" stroke="#d0d0d0" stroke-width="0.8"/><path d="M1767.6 1091.2A14 14 0 0 1 1786.8 1091.2M1770.6 1094.2A9.6 9.6 0 0 1 1783.8 1094.2M1773.6 1097.2A5.2 5.2 0 0 1 1780.8 1097.2" fill="none" stroke="#1a1a1a" stroke-width="1.2" stroke-linecap="round" stroke-linejoin="round"/><circle cx="1777.2" cy="1099.8" r="1.2" fill="#1a1a1a"/><path d="M1798 1090.6H1801.4L1806 1087.2V1100.8L1801.4 1097.4H1798Z" fill="none" stroke="#1a1a1a" stroke-width="1.2" stroke-linecap="round" stroke-linejoin="round"/><path d="M1809 1091.4C1810.4 1093 1810.4 1095 1809 1096.6M1811.6 1089C1814.4 1092 1814.4 1096 1811.6 1099" fill="none" stroke="#1a1a1a" stroke-width="1.2" stroke-linecap="round" stroke-linejoin="round"/><path d="M1814.4 1087A11 11 0 0 1 1814.4 1101" fill="none" stroke="#bbb" stroke-width="1"/><path d="M1833.6 1088.4H1846.6C1847.8 1088.4 1848.4 1089 1848.4 1090.2V1097.2C1848.4 1098.4 1847.8 1099 1846.6 1099H1836.4" fill="none" stroke="#1a1a1a" stroke-width="1.2" stroke-linecap="round" stroke-linejoin="round"/><circle cx="1849.4" cy="1093.6" r="1.6" fill="#1a1a1a"/><path d="M1831.4 1084.8V1088.6M1834.4 1084.8V1088.6" stroke="#1a1a1a" stroke-width="1.1"/><rect x="1830" y="1088" width="5.8" height="4.4" rx="1" fill="#1a1a1a"/><path d="M1832.9 1092V1100.2" stroke="#1a1a1a" stroke-width="1.2"/><circle cx="1963.7" cy="1093.6" r="10.2" fill="#0f6fcf"/></svg>
<div class=t style='left:65.92px;top:23px;font-size:16px;line-height:17px;font-weight:400;color:#262626;transform:scaleX(0.9840)'>Einstellungen</div>
<div class=t style='left:114.39px;top:92px;font-size:18.3px;line-height:21px;font-weight:400;color:#1a1a1a;transform:scaleX(1.0121);-webkit-text-stroke:0.55px #1a1a1a'>Steffen Haubner</div>
<div class=t style='left:114.37px;top:116px;font-size:15.6px;line-height:17px;font-weight:400;color:#1a1a1a;transform:scaleX(1.0297)'>steffen@redaktionsbuero-haubner.de</div>
<div class=t style='left:36.08px;top:196px;font-size:19.3px;line-height:21px;font-weight:400;color:#666666;transform:scaleX(0.9187)'>Einstellung suchen</div>
<div class=t style='left:78.70px;top:270px;font-size:19px;line-height:21px;font-weight:400;color:#202020;transform:scaleX(0.8984)'>System</div>
<div class=t style='left:78.63px;top:322px;font-size:19px;line-height:21px;font-weight:400;color:#202020;transform:scaleX(0.9650)'>Bluetooth &amp; Geräte</div>
<div class=t style='left:78.63px;top:374px;font-size:19px;line-height:21px;font-weight:400;color:#202020;transform:scaleX(0.9747)'>Netzwerk &amp; Internet</div>
<div class=t style='left:78.68px;top:426px;font-size:19px;line-height:21px;font-weight:400;color:#202020;transform:scaleX(0.9243)'>Personalisierung</div>
<div class=t style='left:79.60px;top:478px;font-size:19px;line-height:21px;font-weight:400;color:#202020;transform:scaleX(0.9070)'>Apps</div>
<div class=t style='left:78.66px;top:530px;font-size:19px;line-height:21px;font-weight:400;color:#202020;transform:scaleX(0.9448)'>Konten</div>
<div class=t style='left:79.60px;top:582px;font-size:19px;line-height:21px;font-weight:400;color:#202020;transform:scaleX(0.9392)'>Zeit &amp; Sprache</div>
<div class=t style='left:78.68px;top:634px;font-size:19px;line-height:21px;font-weight:400;color:#202020;transform:scaleX(0.9246)'>Spielen</div>
<div class=t style='left:78.66px;top:686px;font-size:19px;line-height:21px;font-weight:400;color:#202020;transform:scaleX(0.9419)'>Barrierefreiheit</div>
<div class=t style='left:78.65px;top:738px;font-size:19px;line-height:21px;font-weight:400;color:#202020;transform:scaleX(0.9500)'>Datenschutz &amp; Sicherheit</div>
<div class=t style='left:79.60px;top:790px;font-size:19px;line-height:21px;font-weight:400;color:#202020;transform:scaleX(0.9497)'>Windows Update</div>
<div class=t style='left:420.80px;top:77px;font-size:36px;line-height:41px;font-weight:400;color:#1a1a1a;transform:scaleX(0.9983);-webkit-text-stroke:0.5px #1a1a1a'>System</div>
<div class=t style='left:599.08px;top:167px;font-size:22.7px;line-height:26px;font-weight:400;color:#1a1a1a;transform:scaleX(0.9590);-webkit-text-stroke:0.65px #1a1a1a'>LAPTOP-1838JKJ4</div>
<div class=t style='left:599.80px;top:198px;font-size:19.3px;line-height:21px;font-weight:400;color:#585858;transform:scaleX(0.8995)'>HONOR MagicBook Pro</div>
<div class=t style='left:599.77px;top:224px;font-size:19px;line-height:21px;font-weight:400;color:#1c4a8c;transform:scaleX(0.9312)'>Umbenennen</div>
<div class=t style='left:1145.97px;top:168px;font-size:18.6px;line-height:21px;font-weight:400;color:#1a1a1a;transform:scaleX(1.0273);-webkit-text-stroke:0.55px #1a1a1a'>Microsoft 365</div>
<div class=t style='left:1147.00px;top:197px;font-size:15.7px;line-height:17px;font-weight:400;color:#5f5f5f;transform:scaleX(0.9912)'>Verwalten</div>
<div class=t style='left:1338.60px;top:168px;font-size:18.6px;line-height:21px;font-weight:400;color:#1a1a1a;transform:scaleX(1.0000);-webkit-text-stroke:0.55px #1a1a1a'>OneDrive</div>
<div class=t style='left:1338.62px;top:197px;font-size:15.7px;line-height:17px;font-weight:400;color:#5f5f5f;transform:scaleX(0.9818)'>Gesichert</div>
<div class=t style='left:1532.60px;top:168px;font-size:18.6px;line-height:21px;font-weight:400;color:#1a1a1a;transform:scaleX(1.0100);-webkit-text-stroke:0.55px #1a1a1a'>Windows Update</div>
<div class=t style='left:1531.58px;top:197px;font-size:15.7px;line-height:17px;font-weight:400;color:#5f5f5f;transform:scaleX(1.0158)'>Letzte Überprüfung: vor 3</div>
<div class=t style='left:1531.59px;top:218px;font-size:15.7px;line-height:17px;font-weight:400;color:#5f5f5f;transform:scaleX(1.0070)'>Stunden</div>
<div class=t style='left:500.20px;top:313px;font-size:19px;line-height:21px;font-weight:400;color:#202020;transform:scaleX(0.9294)'>Anzeige</div>
<div class=t style='left:499.24px;top:336px;font-size:17px;line-height:19px;font-weight:400;color:#636363;transform:scaleX(0.9554)'>Monitore, Helligkeit, Nachtmodus, Anzeigeprofil</div>
<div class=t style='left:499.26px;top:407px;font-size:19px;line-height:21px;font-weight:400;color:#202020;transform:scaleX(0.9396)'>Sound</div>
<div class=t style='left:499.28px;top:430px;font-size:17px;line-height:19px;font-weight:400;color:#636363;transform:scaleX(0.9169)'>Lautstärkestufen, Ausgabe, Eingabe, Soundgeräte</div>
<div class=t style='left:499.24px;top:500px;font-size:19px;line-height:21px;font-weight:400;color:#202020;transform:scaleX(0.9554)'>Benachrichtigungen</div>
<div class=t style='left:499.27px;top:524px;font-size:17px;line-height:19px;font-weight:400;color:#636363;transform:scaleX(0.9338)'>Benachrichtigungen von Apps und dem System</div>
<div class=t style='left:499.26px;top:594px;font-size:19px;line-height:21px;font-weight:400;color:#202020;transform:scaleX(0.9383)'>Benachrichtigungsassistent</div>
<div class=t style='left:499.27px;top:617px;font-size:17px;line-height:19px;font-weight:400;color:#636363;transform:scaleX(0.9252)'>Benachrichtigungen, automatische Regeln</div>
<div class=t style='left:499.22px;top:688px;font-size:19px;line-height:21px;font-weight:400;color:#202020;transform:scaleX(0.9805)'>Strom &amp; Akku</div>
<div class=t style='left:499.28px;top:711px;font-size:17px;line-height:19px;font-weight:400;color:#636363;transform:scaleX(0.9159)'>Ruhezustand, Batterieverbrauch, Batterieschoner</div>
<div class=t style='left:499.29px;top:781px;font-size:19px;line-height:21px;font-weight:400;color:#202020;transform:scaleX(0.9122)'>Speicher</div>
<div class=t style='left:499.27px;top:804px;font-size:17px;line-height:19px;font-weight:400;color:#636363;transform:scaleX(0.9260)'>Speicherplatz, Laufwerke, Konfigurationsregeln</div>
<div class=t style='left:498.27px;top:875px;font-size:19px;line-height:21px;font-weight:400;color:#202020;transform:scaleX(0.9657)'>In der Nähe freigeben</div>
<div class=t style='left:499.27px;top:898px;font-size:17px;line-height:19px;font-weight:400;color:#636363;transform:scaleX(0.9319)'>Sichtbarkeit, Speicherort der empfangenen Dateien</div>
<div class=t style='left:499.20px;top:968px;font-size:19px;line-height:21px;font-weight:400;color:#202020;transform:scaleX(0.9980)'>Multitasking</div>
<div class=t style='left:499.28px;top:992px;font-size:17px;line-height:19px;font-weight:400;color:#636363;transform:scaleX(0.9182)'>Fenster andocken, Desktops, Aufgabenwechsel</div>
<div class=t style='left:67.56px;top:1076px;font-size:15.7px;line-height:17px;font-weight:400;color:#1a1a1a;transform:scaleX(0.9400)'>6°C</div>
<div class=t style='left:67.47px;top:1096px;font-size:15px;line-height:17px;font-weight:400;color:#3c3c3c;transform:scaleX(1.0250)'>Leichter Regen</div>
<div class=t style='left:1907.59px;top:1074px;font-size:15.5px;line-height:17px;font-weight:400;color:#1a1a1a;transform:scaleX(0.9079)'>16:20</div>
<div class=t style='left:1870.05px;top:1095px;font-size:15.5px;line-height:17px;font-weight:400;color:#1a1a1a;transform:scaleX(0.9474)'>17.02.2022</div>
<div class=t style='left:1960.30px;top:1086px;font-size:14px;line-height:16px;font-weight:700;color:#ffffff;transform:scaleX(0.8375)'>5</div>
</body></html>
